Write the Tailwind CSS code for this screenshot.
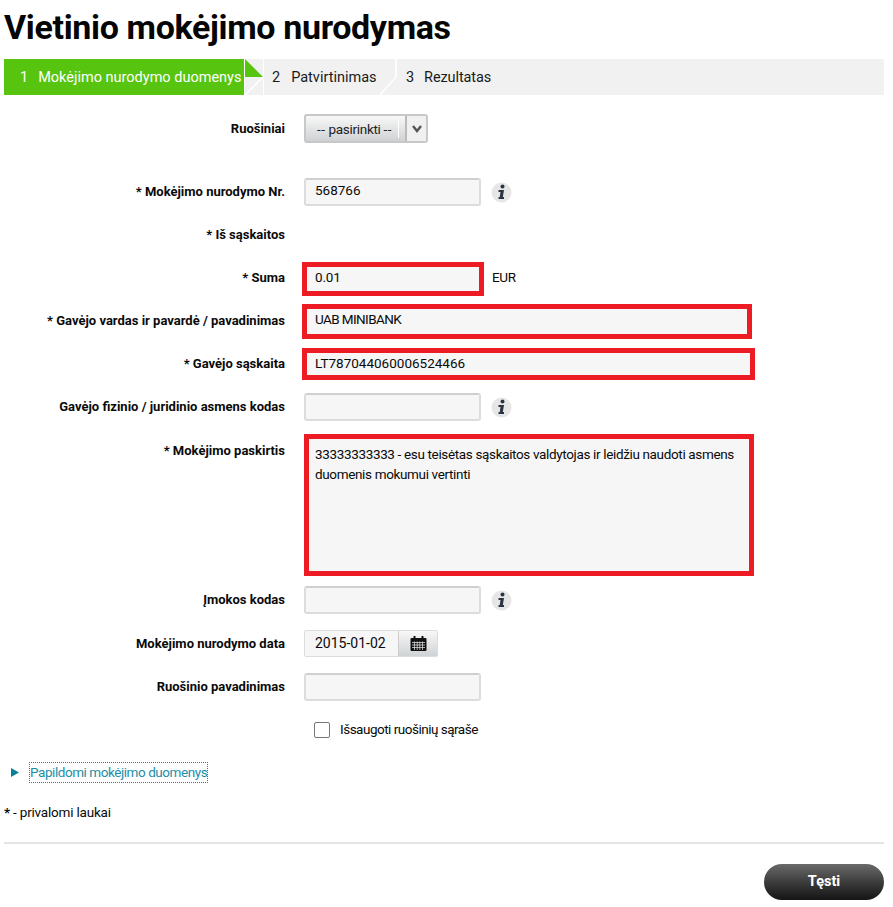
<!DOCTYPE html>
<html lang="lt"><head><meta charset="utf-8">
<script src="https://cdn.jsdelivr.net/npm/@tailwindcss/browser@4"></script>
</head>
<body class="bg-white text-[#0a0a0a] font-['Roboto','Liberation_Sans',sans-serif] text-[14px] overflow-hidden">
<div class="w-[893px] h-[907px] pl-[4px] pr-[9px] flex flex-col">
  <h1 class="h-[59px] pt-[6px] text-[34px] leading-[42px] font-bold text-[#050505] tracking-[-0.35px]">Vietinio mokėjimo nurodymas</h1>
  <div class="flex h-[36px] bg-[#f1f1f1] text-[14.500px] leading-[37px] text-[#1a1a1a]">
    <div class="w-[240px] shrink-0 bg-[#57c40f] text-white pl-[16px] flex gap-[10px] whitespace-nowrap"><span>1</span><span>Mokėjimo nurodymo duomenys</span></div>
    <div class="relative w-[20px] shrink-0">
      <svg class="absolute left-0 top-0" width="20" height="36" viewBox="0 0 20 36"><rect x="0" width="1" height="36" fill="#fff"/><rect x="19" width="1" height="36" fill="#fff"/><path d="M1 0 L19 18 L1 18Z" fill="#57c40f"/><path d="M1 36 L19 18" stroke="#fff" stroke-width="1.500"/></svg>
    </div>
    <div class="relative w-[134px] shrink-0 pl-[8px] flex gap-[11px]"><span>2</span><span>Patvirtinimas</span>
      <svg class="absolute right-0 top-0" width="18" height="36" viewBox="0 0 18 36"><path d="M0 36 L16 18 V0" fill="none" stroke="#fff" stroke-width="1.500"/></svg>
    </div>
    <div class="pl-[8px] flex gap-[10px] tracking-[-0.1px]"><span>3</span><span>Rezultatas</span></div>
  </div>

  <div class="flex mt-[19px] h-[29px] items-center">
    <label class="w-[281px] text-right font-bold text-[13px]">Ruošiniai</label>
    <div class="ml-[19px] w-[124px] h-[29px] rounded-[3px] border-2 border-[#c8c8c8] bg-gradient-to-b from-[#f8f8f8] to-[#cfd2d4] flex text-[13.500px]">
      <span class="w-[92px] pl-[11px] leading-[27px] text-[#222] whitespace-nowrap tracking-[-0.3px]"><span class="tracking-[0.500px]">--</span> pasirinkti <span class="tracking-[0.500px]">--</span></span>
      <span class="w-[1px] my-[3px] bg-white"></span>
      <span class="ml-[6px] flex-1 border-l-2 border-[#bbb] bg-[#f0f0f0] flex items-center justify-center">
        <svg width="12" height="10" viewBox="0 0 12 10"><path d="M2 2 L6 7 L10 2" fill="none" stroke="#555" stroke-width="2.400"/></svg>
      </span>
    </div>
  </div>

  <div class="flex mt-[35px] h-[28px] items-center">
    <label class="w-[281px] text-right font-bold text-[13px]">* Mokėjimo nurodymo Nr.</label>
    <div class="ml-[19px] w-[177px] h-[28px] rounded-[3px] border-2 border-[#dcdcdc] border-t-[#d0d0d0] bg-[#f6f6f6] pl-[9px] leading-[21px] text-[13.500px]">568766</div>
    <svg class="ml-[10px]" width="21" height="21" viewBox="0 0 21 21"><circle cx="10.500" cy="10.500" r="10" fill="#e6e6e6"/><circle cx="11.500" cy="4.500" r="2" fill="#2b3440"/><path d="M7.500 8 H13 L11.800 15 L13 15 V17 H7.500 V15.200 L8.800 15 L9.500 10 L7.500 10Z" fill="#2b3440"/></svg>
  </div>

  <div class="flex mt-[20px] h-[18px] items-center">
    <label class="w-[281px] text-right font-bold text-[13px]">* Iš sąskaitos</label>
  </div>

  <div class="flex mt-[18px] h-[34px] items-center">
    <label class="w-[281px] text-right font-bold text-[13px] -mt-[2px]">* Suma</label>
    <div class="ml-[17px] w-[182px] h-[34px] border-[5px] border-[#ed1c24] bg-[#f6f6f6] pl-[8px] leading-[20px] text-[13.500px] tracking-[-0.2px]">0.01</div>
    <span class="ml-[8px] text-[13.500px] tracking-[-0.3px] -mt-[3px]">EUR</span>
  </div>

  <div class="flex mt-[8px] h-[35px] items-center">
    <label class="w-[281px] text-right font-bold text-[13px] -mt-[1px]">* Gavėjo vardas ir pavardė / pavadinimas</label>
    <div class="ml-[17px] w-[450px] h-[35px] border-[5px] border-[#ed1c24] bg-[#f6f6f6] pl-[8px] leading-[21px] text-[13.500px] tracking-[-0.6px]">UAB MINIBANK</div>
  </div>

  <div class="flex mt-[9px] h-[32px] items-center">
    <label class="w-[281px] text-right font-bold text-[13px]">* Gavėjo sąskaita</label>
    <div class="ml-[17px] w-[453px] h-[32px] border-[5px] border-[#ed1c24] bg-[#f6f6f6] pl-[8px] leading-[21px] text-[13.500px]">LT787044060006524466</div>
  </div>

  <div class="flex mt-[13px] h-[28px] items-center">
    <label class="w-[281px] text-right font-bold text-[13px]">Gavėjo fizinio / juridinio asmens kodas</label>
    <div class="ml-[19px] w-[177px] h-[28px] rounded-[3px] border-2 border-[#dcdcdc] border-t-[#d0d0d0] bg-[#f6f6f6]"></div>
    <svg class="ml-[10px]" width="21" height="21" viewBox="0 0 21 21"><circle cx="10.500" cy="10.500" r="10" fill="#e6e6e6"/><circle cx="11.500" cy="4.500" r="2" fill="#2b3440"/><path d="M7.500 8 H13 L11.800 15 L13 15 V17 H7.500 V15.200 L8.800 15 L9.500 10 L7.500 10Z" fill="#2b3440"/></svg>
  </div>

  <div class="flex mt-[13px] h-[142px]">
    <label class="w-[281px] text-right font-bold text-[13px] pt-[7px]">* Mokėjimo paskirtis</label>
    <div class="ml-[19px] w-[450px] h-[142px] border-[5px] border-[#ed1c24] bg-[#f6f6f6] pl-[6px] pr-[8px] pt-[5px] leading-[20px] text-[13.500px] tracking-[-0.35px]">33333333333 - esu teisėtas sąskaitos valdytojas ir leidžiu naudoti asmens duomenis mokumui vertinti</div>
  </div>

  <div class="flex mt-[10px] h-[28px] items-center">
    <label class="w-[281px] text-right font-bold text-[13px]">Įmokos kodas</label>
    <div class="ml-[19px] w-[177px] h-[28px] rounded-[3px] border-2 border-[#dcdcdc] border-t-[#d0d0d0] bg-[#f6f6f6]"></div>
    <svg class="ml-[10px]" width="21" height="21" viewBox="0 0 21 21"><circle cx="10.500" cy="10.500" r="10" fill="#e6e6e6"/><circle cx="11.500" cy="4.500" r="2" fill="#2b3440"/><path d="M7.500 8 H13 L11.800 15 L13 15 V17 H7.500 V15.200 L8.800 15 L9.500 10 L7.500 10Z" fill="#2b3440"/></svg>
  </div>

  <div class="flex mt-[16px] h-[27px] items-center">
    <label class="w-[281px] text-right font-bold text-[13px]">Mokėjimo nurodymo data</label>
    <div class="ml-[19px] w-[134px] h-[27px] rounded-[2px] border border-[#dcdcdc] flex">
      <span class="w-[93px] bg-[#f6f6f6] pl-[10px] leading-[24px] text-[14px]">2015-01-02</span>
      <span class="flex-1 border-l border-[#ccc] bg-gradient-to-b from-[#f8f8f8] to-[#d0d3d5] flex items-center justify-center">
        <svg width="17" height="15" viewBox="0 0 17 15"><rect x="0.500" y="2" width="16" height="13" rx="1" fill="#111"/><rect x="3.500" y="0" width="2" height="4" fill="#111"/><rect x="11.500" y="0" width="2" height="4" fill="#111"/><path d="M2 6.500 H15 M2 9 H15 M2 11.500 H15 M4.500 5.500 V14 M7.200 5.500 V14 M9.800 5.500 V14 M12.500 5.500 V14" stroke="#d8d8d8" stroke-width="0.800"/></svg>
      </span>
    </div>
  </div>

  <div class="flex mt-[16px] h-[28px] items-center">
    <label class="w-[281px] text-right font-bold text-[13px]">Ruošinio pavadinimas</label>
    <div class="ml-[19px] w-[177px] h-[28px] rounded-[3px] border-2 border-[#dcdcdc] border-t-[#d0d0d0] bg-[#f6f6f6]"></div>
  </div>

  <div class="flex mt-[20px] h-[18px] items-center pl-[310px]">
    <span class="w-[16px] h-[16px] border border-[#777] rounded-[2px] bg-white"></span>
    <span class="ml-[10px] -mt-[1px] text-[13.500px] tracking-[-0.5px]">Išsaugoti ruošinių sąraše</span>
  </div>

  <div class="flex mt-[23px] h-[21px] items-center pl-[7px]">
    <svg width="8" height="9" viewBox="0 0 8 9"><path d="M0 0 L8 4.500 L0 9Z" fill="#0a7f96"/></svg>
    <span class="ml-[10px] h-[21px] leading-[19px] border border-dotted border-[#0a8ea3] text-[#1d8ea8] text-[13.500px] tracking-[-0.44px] whitespace-nowrap">Papildomi mokėjimo duomenys</span>
  </div>

  <div class="mt-[20px] mb-[1px] h-[18px] leading-[18px] text-[13.500px] tracking-[-0.2px]"><b>*</b> - privalomi laukai</div>

  <div class="mt-[20px] h-[2px] bg-[#e4e4e4] w-[880px]"></div>

  <div class="flex justify-end w-[880px] mt-[20px]">
    <button class="w-[120px] h-[36px] rounded-full bg-gradient-to-b from-[#6a6a6a] to-[#151515] text-white font-bold text-[14.500px]">Tęsti</button>
  </div>
</div>
</body></html>
